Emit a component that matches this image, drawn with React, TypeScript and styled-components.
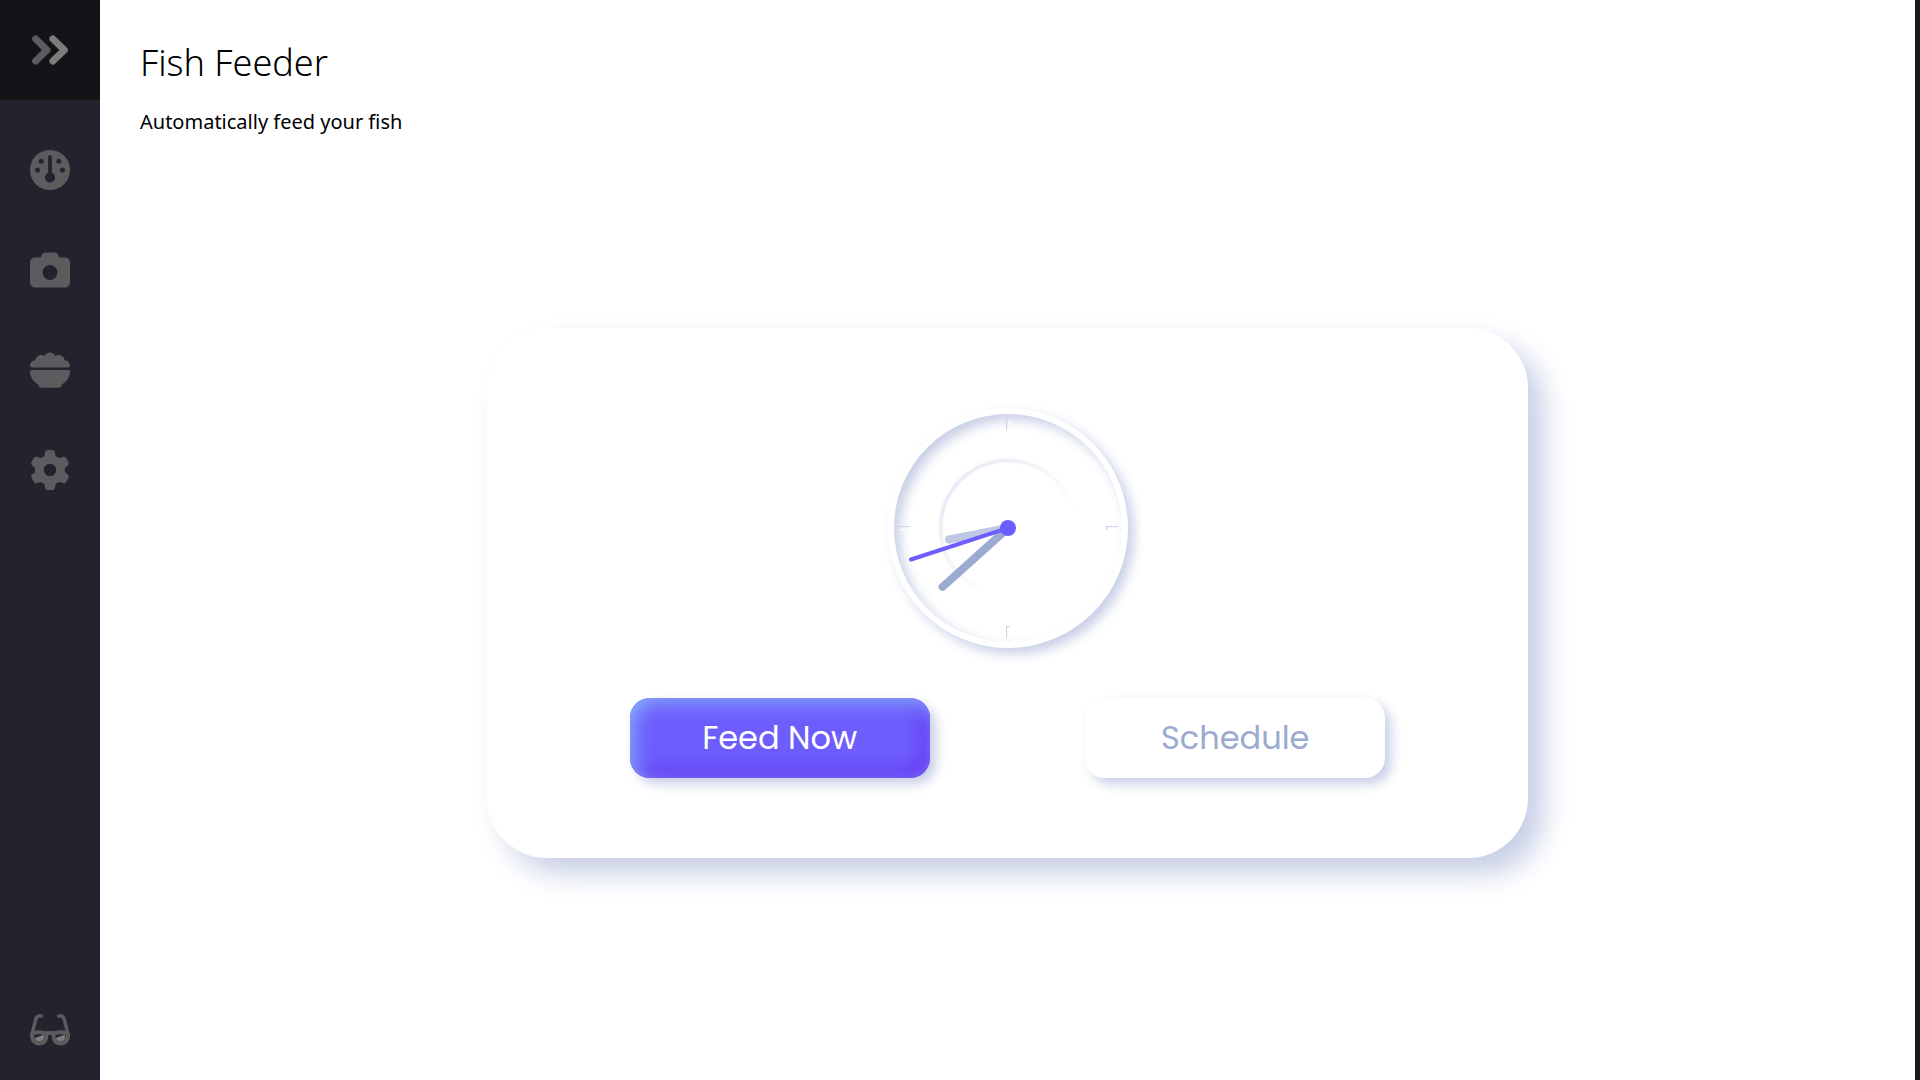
import React from "react";
import styled, { createGlobalStyle, css } from "styled-components";
import { FaCamera, FaGauge, FaGear } from "react-icons/fa6";

const color = {
  page: "#ffffff",
  rail: "#23232e",
  railTop: "#141418",
  icon: "#5c5c5e",
  iconLight: "#7c7c7c",
  primaryLight: "#8abdff",
  primary: "#6d5dfc",
  primaryDark: "#5b0eeb",
  grey: "#c8d0e7",
  greyMid: "#bec8e4",
  greyDark: "#9baacf",
};

const raised = `6px 6px 12px ${color.grey}, -4px -4px 10px ${color.page}`;

const GlobalStyle = createGlobalStyle`
  *, *::before, *::after { box-sizing: border-box; }
  body {
    margin: 0;
    background: #191920;
    color: #000;
    font-family: "Segoe UI", "Noto Sans", sans-serif;
  }
`;

const Layout = styled.div`
  display: grid;
  grid-template-columns: 100px 1fr;
  min-height: 100vh;
  padding-right: 5px;
`;

const Rail = styled.nav`
  display: flex;
  flex-direction: column;
  background: ${color.rail};
`;

const RailLink = styled.a<{ $place?: "top" | "bottom" }>`
  display: flex;
  align-items: center;
  justify-content: center;
  height: 100px;
  color: ${color.icon};
  ${(p) => p.$place === "top" && css`
    background: ${color.railTop};
    margin-bottom: 20px;
  `}
  ${(p) => p.$place === "bottom" && css`
    margin-top: auto;
  `}
  svg {
    width: 40px;
    height: 40px;
  }
`;

const Main = styled.main`
  display: flex;
  flex-direction: column;
  padding: 40px;
  background: ${color.page};
`;

const Header = styled.header`
  display: flex;
  flex-direction: column;
  gap: 20px;
  height: 106px;
`;

const Title = styled.h1`
  margin: 0;
  font-size: 36px;
  font-weight: 300;
  line-height: 46px;
`;

const Subtitle = styled.p`
  margin: 0;
  font-size: 20px;
  line-height: 32px;
`;

const Stage = styled.section`
  flex: 1;
  display: flex;
  align-items: center;
  justify-content: center;
`;

const Card = styled.div`
  display: grid;
  grid-template-columns: 1fr 1fr;
  justify-items: center;
  gap: 50px 30px;
  width: 60%;
  padding: 80px;
  border-radius: 60px;
  background: ${color.page};
  box-shadow: 16px 16px 28px ${color.grey}, -4px -4px 36px ${color.page};
`;

const ActionButton = styled.button<{ $primary?: boolean }>`
  width: 300px;
  height: 80px;
  padding: 0;
  border: 0;
  border-radius: 20px;
  font-family: Poppins, Inter, sans-serif;
  font-size: 32px;
  font-weight: 400;
  cursor: pointer;
  color: ${(p) => (p.$primary ? "#fff" : color.greyDark)};
  background: ${(p) => (p.$primary ? color.primary : color.page)};
  box-shadow: ${(p) =>
    p.$primary
      ? `inset 4px 4px 20px ${color.primaryLight}, inset -4px -4px 20px ${color.primaryDark}, ${raised}`
      : raised};
`;

const ClockBody = styled.div`
  grid-column: 1 / -1;
  position: relative;
  display: grid;
  place-items: center;
  width: 240px;
  height: 240px;
  border-radius: 50%;
  box-shadow: ${raised};
  > * {
    grid-area: 1 / 1;
  }
`;

const Face = styled.div`
  width: 228px;
  height: 228px;
  border-radius: 50%;
  box-shadow: inset 6px 6px 12px ${color.grey}, inset -4px -4px 10px ${color.page};
`;

const Halo = styled.div`
  width: 138px;
  height: 138px;
  border-radius: 50%;
  background: linear-gradient(135deg, rgba(200, 208, 231, 0.7), rgba(228, 235, 245, 0) 68%);
  filter: blur(1px);
`;

const HaloCover = styled.div`
  width: 132px;
  height: 132px;
  border-radius: 50%;
  background: ${color.page};
  filter: blur(1px);
`;

const Tick = styled.span<{ $side: "top" | "right" | "bottom" | "left" }>`
  position: absolute;
  ${(p) => `${p.$side}: 10px;`}
  width: ${(p) => (p.$side === "left" || p.$side === "right" ? 12 : 4)}px;
  height: ${(p) => (p.$side === "left" || p.$side === "right" ? 4 : 12)}px;
  box-shadow: inset 1px 1px 1px ${color.grey}, inset -1px -1px 1px ${color.page};
`;

const Hand = styled.div<{ $width: number; $length: number; $color: string }>`
  position: absolute;
  bottom: 50%;
  width: ${(p) => p.$width}px;
  height: ${(p) => p.$length}px;
  border-radius: 4px;
  background: ${(p) => p.$color};
  transform-origin: bottom;
`;

const Pivot = styled.div`
  width: 16px;
  height: 16px;
  border-radius: 50%;
  background: ${color.primary};
  z-index: 1;
`;

function ChevronsIcon() {
  return (
    <svg viewBox="0 0 40 40" fill="none" strokeWidth="7" strokeLinecap="round" strokeLinejoin="round" aria-hidden="true">
      <path d="M5.7 9 17 20 5.7 31" stroke={color.icon} />
      <path d="M22.9 9 34.4 20 22.9 31" stroke={color.iconLight} />
    </svg>
  );
}

function BowlIcon() {
  return (
    <svg viewBox="0 0 40 40" fill="currentColor" aria-hidden="true">
      <path d="M1.8 17.4C.8 17.4 0 16.600 0 15.500c0-2.900 2.100-5.100 5.200-5.300C5.900 7 8.300 5 11.300 5c1.200 0 2.300.3 3.200.9C15.600 3.700 17.700 2.400 20 2.400s4.400 1.300 5.500 3.500c.9-.6 2-.9 3.200-.9 3 0 5.400 2 6.100 5.200 3.100.2 5.200 2.400 5.200 5.300 0 1.100-.8 1.900-1.800 1.900z" />
      <path d="M1.500 20h37c.9 0 1.500.6 1.500 1.500 0 5.300-3.300 10.500-8.500 13.200v.6c0 1.400-1.100 2.500-2.500 2.500H11c-1.400 0-2.500-1.100-2.500-2.500v-.6C3.300 32 0 26.800 0 21.500 0 20.600.6 20 1.500 20z" />
    </svg>
  );
}

function GlassesIcon() {
  return (
    <svg viewBox="0 0 40 40" fill="none" stroke="currentColor" aria-hidden="true">
      <path d="M11.400 6H9.500C7.300 6 6.300 7.300 5.700 9.500L1.800 25M28.600 6h1.900c2.200 0 3.200 1.300 3.800 3.500L38.200 25" strokeWidth="3.400" strokeLinecap="round" />
      <path d="M5 28 14 24.500v3c0 2.300-1.500 4-4.500 4S5 30.300 5 28zM26 28 35 24.500v3c0 2.300-1.500 4-4.500 4s-4.500-1.500-4.500-3.500z" fill={color.iconLight} stroke="none" />
      <path d="M2 24c3-2.500 11-2.500 14.300 0 .6 6-1.600 9.400-6.600 9.400C4.700 33.400 2 30.500 2 24zM38 24c-3-2.500-11-2.500-14.300 0-.6 6 1.600 9.400 6.600 9.400 5 0 7.700-2.900 7.700-9.400z" strokeWidth="4" strokeLinejoin="round" />
      <path d="M16 23h8" strokeWidth="4" />
    </svg>
  );
}

function Clock({ hours, minutes, seconds }: { hours: number; minutes: number; seconds: number }) {
  const turn = (degrees: number) => ({ transform: `rotate(${degrees}deg)` });
  return (
    <ClockBody role="img" aria-label="Clock">
      <Face />
      <Halo />
      <HaloCover />
      <Tick $side="top" />
      <Tick $side="right" />
      <Tick $side="bottom" />
      <Tick $side="left" />
      <Hand $width={8} $length={64} $color={color.greyMid} style={turn(hours * 30 + minutes / 2)} />
      <Hand $width={8} $length={92} $color={color.greyDark} style={turn(minutes * 6)} />
      <Hand $width={4} $length={104} $color={color.primary} style={turn(seconds * 6)} />
      <Pivot />
    </ClockBody>
  );
}

export default function App() {
  return (
    <>
      <GlobalStyle />
      <Layout>
        <Rail aria-label="Main">
          <RailLink href="#menu" $place="top" aria-label="Expand menu"><ChevronsIcon /></RailLink>
          <RailLink href="#dashboard" aria-label="Dashboard"><FaGauge /></RailLink>
          <RailLink href="#camera" aria-label="Camera"><FaCamera /></RailLink>
          <RailLink href="#feeder" aria-label="Feeder"><BowlIcon /></RailLink>
          <RailLink href="#settings" aria-label="Settings"><FaGear /></RailLink>
          <RailLink href="#theme" $place="bottom" aria-label="Theme"><GlassesIcon /></RailLink>
        </Rail>
        <Main>
          <Header>
            <Title>Fish Feeder</Title>
            <Subtitle>Automatically feed your fish</Subtitle>
          </Header>
          <Stage>
            <Card>
              <Clock hours={8} minutes={38} seconds={42} />
              <ActionButton type="button" $primary>Feed Now</ActionButton>
              <ActionButton type="button">Schedule</ActionButton>
            </Card>
          </Stage>
        </Main>
      </Layout>
    </>
  );
}
